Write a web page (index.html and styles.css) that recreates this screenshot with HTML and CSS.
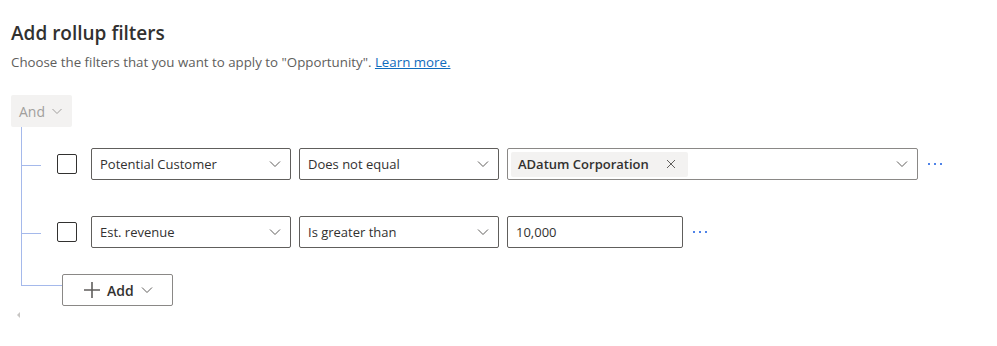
FILE: index.html
```html
<!DOCTYPE html>
<html lang="en">
<head>
<meta charset="utf-8">
<title>Add rollup filters</title>
<link rel="stylesheet" href="styles.css">
</head>
<body>
<div class="page">
  <h1 class="title">Add rollup filters</h1>
  <p class="subtitle">Choose the filters that you want to apply to "Opportunity". <a href="#" class="link">Learn more.</a></p>

  <button class="and-btn" disabled>And <svg class="chev" width="12" height="12" viewBox="0 0 12 12"><path d="M1.5 4 L6 8.5 L10.5 4" fill="none" stroke="currentColor" stroke-width="1"/></svg></button>

  <div class="tree">
    <div class="row">
      <span class="checkbox"></span>
      <div class="field select w200"><span class="val">Potential Customer</span><svg class="chev" width="12" height="12" viewBox="0 0 12 12"><path d="M1 3.5 L6 8.5 L11 3.5" fill="none" stroke="currentColor" stroke-width="1"/></svg></div>
      <div class="field select w200"><span class="val">Does not equal</span><svg class="chev" width="12" height="12" viewBox="0 0 12 12"><path d="M1 3.5 L6 8.5 L11 3.5" fill="none" stroke="currentColor" stroke-width="1"/></svg></div>
      <div class="field multi">
        <span class="tag">ADatum Corporation <svg class="x" width="10" height="10" viewBox="0 0 10 10"><path d="M1 1 L9 9 M9 1 L1 9" stroke="currentColor" stroke-width="1"/></svg></span>
        <svg class="chev" width="12" height="12" viewBox="0 0 12 12"><path d="M1 3.5 L6 8.5 L11 3.5" fill="none" stroke="currentColor" stroke-width="1"/></svg>
      </div>
      <svg class="more" width="16" height="4" viewBox="0 0 16 4"><rect x="1" y="1" width="2" height="2"/><rect x="7" y="1" width="2" height="2"/><rect x="13" y="1" width="2" height="2"/></svg>
    </div>
    <div class="row">
      <span class="checkbox"></span>
      <div class="field select w200"><span class="val">Est. revenue</span><svg class="chev" width="12" height="12" viewBox="0 0 12 12"><path d="M1 3.5 L6 8.5 L11 3.5" fill="none" stroke="currentColor" stroke-width="1"/></svg></div>
      <div class="field select w200"><span class="val">Is greater than</span><svg class="chev" width="12" height="12" viewBox="0 0 12 12"><path d="M1 3.5 L6 8.5 L11 3.5" fill="none" stroke="currentColor" stroke-width="1"/></svg></div>
      <div class="field text"><span class="val">10,000</span></div>
      <svg class="more" width="16" height="4" viewBox="0 0 16 4"><rect x="1" y="1" width="2" height="2"/><rect x="7" y="1" width="2" height="2"/><rect x="13" y="1" width="2" height="2"/></svg>
    </div>
    <div class="add-row">
      <button class="add-btn"><svg class="plus" width="18" height="18" viewBox="0 0 18 18"><path d="M9 1 V17 M1 9 H17" stroke="currentColor" stroke-width="1.6"/></svg><span>Add</span><svg class="chev" width="12" height="12" viewBox="0 0 12 12"><path d="M1 3.5 L6 8.5 L11 3.5" fill="none" stroke="currentColor" stroke-width="1"/></svg></button>
    </div>
  </div>
  <span class="scroll-arrow"></span>
</div>
</body>
</html>
```

FILE: styles.css
```css
* { box-sizing: border-box; }
html, body { margin: 0; padding: 0; background: #fff; }
body {
  font-family: "Segoe UI", "Open Sans", "Noto Sans", sans-serif;
  color: #323130;
  width: 997px;
  height: 346px;
  overflow: hidden;
}
.page { padding: 19px 0 0 11px; }
.title {
  margin: 0;
  font-size: 19px;
  line-height: 28px;
  font-weight: 600;
  color: #323130;
}
.subtitle {
  margin: 6px 0 0;
  font-size: 13.3px;
  line-height: 18px;
  color: #605e5c;
}
.link { color: #0f6cbd; text-decoration: underline; }

.and-btn {
  margin-top: 24px;
  display: flex;
  align-items: center;
  gap: 6px;
  height: 32px;
  width: 61px;
  padding: 0 0 0 8px;
  border: none;
  border-radius: 2px;
  background: #f3f2f1;
  color: #a19f9d;
  font-family: inherit;
  font-size: 14px;
}

.tree {
  position: relative;
  margin-left: 10px;
  padding-top: 21px;
  display: flex;
  flex-direction: column;
}
.tree::before {
  content: "";
  position: absolute;
  left: 0;
  top: 0;
  height: 158px;
  width: 1px;
  background: #a5b9eb;
}
.row {
  position: relative;
  display: flex;
  align-items: center;
  height: 32px;
  padding-left: 36px;
  margin-bottom: 36px;
}
.row:nth-child(2) { margin-bottom: 26px; }
.row::before {
  content: "";
  position: absolute;
  left: 0;
  top: 17px;
  width: 20px;
  height: 1px;
  background: #a5b9eb;
}
.checkbox {
  width: 20px;
  height: 20px;
  border: 1px solid #323130;
  border-radius: 2px;
  margin-right: 14px;
  flex: none;
}
.field {
  height: 32px;
  display: flex;
  align-items: center;
  border: 1px solid #605e5c;
  border-radius: 2px;
  font-size: 13px;
  color: #323130;
  margin-right: 8px;
  flex: none;
}
.w200 { width: 200px; }
.select { padding: 0 9px 0 8px; justify-content: space-between; }
.select .chev, .multi .chev { color: #605e5c; }
.multi {
  width: 411px;
  border-color: #8a8886;
  padding: 0 9px 0 3px;
  justify-content: space-between;
}
.tag {
  display: flex;
  align-items: center;
  height: 25px;
  padding: 0 12px 0 7px;
  background: #f3f2f1;
  border-radius: 2px;
  font-weight: 600;
  font-size: 13px;
  color: #323130;
}
.tag .x { margin-left: 17px; color: #605e5c; }
.text { width: 176px; padding: 0 8px; }
.more { fill: #4f83e8; margin-left: 1px; }

.add-row {
  position: relative;
  padding-left: 41px;
}
.add-row::before {
  content: "";
  position: absolute;
  left: 0;
  top: 11px;
  width: 41px;
  height: 1px;
  background: #a5b9eb;
}
.add-btn {
  display: flex;
  align-items: center;
  height: 32px;
  width: 111px;
  padding: 0 0 0 20px;
  background: #fff;
  border: 1px solid #8a8886;
  border-radius: 2px;
  font-family: inherit;
  font-size: 14px;
  font-weight: 600;
  color: #323130;
}
.add-btn .plus { color: #605e5c; margin-right: 6px; }
.add-btn .chev { color: #605e5c; margin-left: 7px; }

.scroll-arrow {
  display: block;
  margin: 6px 0 0 6px;
  width: 0;
  height: 0;
  border-top: 3px solid transparent;
  border-bottom: 3px solid transparent;
  border-right: 3px solid #c8c6c4;
}
```
